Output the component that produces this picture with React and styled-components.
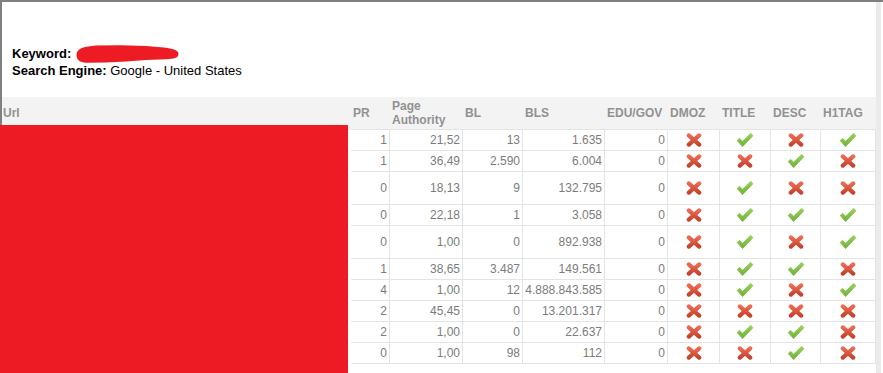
import React, { useId } from "react";
import styled, { createGlobalStyle } from "styled-components";

const Global = createGlobalStyle`
  html, body { margin: 0; padding: 0; background: #fff; }
  body { width: 883px; height: 373px; overflow: hidden; font-family: "Liberation Sans", Arial, sans-serif; }
  * { box-sizing: border-box; }
`;

const COLS = "349px 39px 73px 60px 82px 63px 52px 51px 50px 55px";

const Page = styled.div`
  position: relative;
  width: 883px;
  height: 373px;
  overflow: hidden;
  background: #fff;
`;

const Frame = styled.div`
  display: flex;
  height: 100%;
  border-top: 2px solid #808080;
  border-left: 2px solid #808080;
`;

const Main = styled.div`
  width: 874px;
  flex: none;
`;

const ScrollStrip = styled.div`
  width: 5px;
  flex: none;
  background: #ebebeb;
`;

const Info = styled.div`
  padding: 43px 0 18px 10px;
  font-size: 13px;
  line-height: 17px;
  color: #000;
`;

const InfoLine = styled.div`
  white-space: nowrap;
  height: 17px;
`;

const Label = styled.b`
  font-weight: bold;
`;

const Scribble = styled.svg`
  display: inline-block;
  vertical-align: top;
  width: 103px;
  height: 18px;
  margin-left: 1px;
`;

const HeaderRow = styled.div`
  display: grid;
  grid-template-columns: ${COLS};
  height: 33px;
`;

const HeadCell = styled.div`
  display: flex;
  align-items: center;
  padding: 0 2px 0 ${(p) => (p.$url ? "1px" : "2px")};
  background: #f3f3f3;
  border-bottom: 1px solid ${(p) => (p.$url ? "#f3f3f3" : "#e4e4e4")};
  font-size: 12px;
  font-weight: bold;
  line-height: 14px;
  color: #919191;
`;

const Row = styled.div`
  display: grid;
  grid-template-columns: ${COLS};
  height: ${(p) => (p.$tall ? "33px" : "21px")};
`;

const UrlCell = styled.div``;

const Cell = styled.div`
  display: flex;
  align-items: center;
  justify-content: ${(p) => (p.$icon ? "center" : "flex-end")};
  padding: 0 2px;
  border-right: 1px solid #e4e4e4;
  border-bottom: 1px solid #e4e4e4;
  font-size: 12px;
  line-height: 14px;
  color: #7c7c7c;
  white-space: nowrap;
`;

const Redaction = styled.div`
  position: absolute;
  left: 0;
  top: 125px;
  width: 348px;
  height: 248px;
  background: #ed1c24;
`;

function Cross() {
  const id = useId().replace(/:/g, "");
  return (
    <svg width="16" height="14" viewBox="0 0 16 14">
      <defs>
        <linearGradient id={`x${id}`} x1="0" y1="0" x2="0" y2="1">
          <stop offset="0" stopColor="#ec6a51" />
          <stop offset="1" stopColor="#c6442d" />
        </linearGradient>
      </defs>
      <g stroke={`url(#x${id})`} strokeWidth="4.2" strokeLinecap="round">
        <path d="M2.8 2.4 L13.2 11.6" />
        <path d="M13.2 2.4 L2.8 11.6" />
      </g>
    </svg>
  );
}

function Check() {
  const id = useId().replace(/:/g, "");
  return (
    <svg width="18" height="16" viewBox="0 0 18 16">
      <defs>
        <linearGradient id={`c${id}`} x1="0" y1="0" x2="0" y2="1">
          <stop offset="0" stopColor="#9ad15b" />
          <stop offset="1" stopColor="#6fb23a" />
        </linearGradient>
      </defs>
      <path
        d="M1.2 8.6 L3.6 6.3 L6.6 9.3 L14.6 1.3 L17 3.7 L6.6 14.6 Z"
        fill={`url(#c${id})`}
        stroke={`url(#c${id})`}
        strokeWidth="0.8"
        strokeLinejoin="round"
      />
    </svg>
  );
}

const headers = ["Url", "PR", "Page Authority", "BL", "BLS", "EDU/GOV", "DMOZ", "TITLE", "DESC", "H1TAG"];

const rows = [
  { tall: false, v: ["1", "21,52", "13", "1.635", "0"], i: [0, 1, 0, 1] },
  { tall: false, v: ["1", "36,49", "2.590", "6.004", "0"], i: [0, 0, 1, 0] },
  { tall: true, v: ["0", "18,13", "9", "132.795", "0"], i: [0, 1, 0, 0] },
  { tall: false, v: ["0", "22,18", "1", "3.058", "0"], i: [0, 1, 1, 1] },
  { tall: true, v: ["0", "1,00", "0", "892.938", "0"], i: [0, 1, 0, 1] },
  { tall: false, v: ["1", "38,65", "3.487", "149.561", "0"], i: [0, 1, 1, 0] },
  { tall: false, v: ["4", "1,00", "12", "4.888.843.585", "0"], i: [0, 1, 0, 1] },
  { tall: false, v: ["2", "45,45", "0", "13.201.317", "0"], i: [0, 0, 0, 0] },
  { tall: false, v: ["2", "1,00", "0", "22.637", "0"], i: [0, 1, 1, 0] },
  { tall: false, v: ["0", "1,00", "98", "112", "0"], i: [0, 0, 1, 0] },
];

export default function App() {
  return (
    <Page>
      <Global />
      <Frame>
        <Main>
          <Info>
            <InfoLine>
              <Label>Keyword:</Label>{" "}
              <Scribble viewBox="0 0 103 18" preserveAspectRatio="none">
                <path
                  d="M0.5 10 C0.5 5 5 2.5 12 1.5 L20 0.5 L45 0.2 L70 1 L88 2.5 C97 3.5 102.5 5 102.5 9 C102.5 13 98 14 90 14.2 L70 15 L50 16.5 L30 17.6 L12 17.8 C4 17.8 0.5 15 0.5 10 Z"
                  fill="#ed1c24"
                />
              </Scribble>
            </InfoLine>
            <InfoLine>
              <Label>Search Engine:</Label> Google - United States
            </InfoLine>
          </Info>
          <HeaderRow>
            {headers.map((h, k) => (
              <HeadCell key={h} $url={k === 0}>
                {h}
              </HeadCell>
            ))}
          </HeaderRow>
          {rows.map((r, k) => (
            <Row key={k} $tall={r.tall}>
              <UrlCell />
              {r.v.map((v, j) => (
                <Cell key={j}>{v}</Cell>
              ))}
              {r.i.map((ok, j) => (
                <Cell key={"i" + j} $icon>
                  {ok ? <Check /> : <Cross />}
                </Cell>
              ))}
            </Row>
          ))}
        </Main>
        <ScrollStrip />
      </Frame>
      <Redaction />
    </Page>
  );
}
